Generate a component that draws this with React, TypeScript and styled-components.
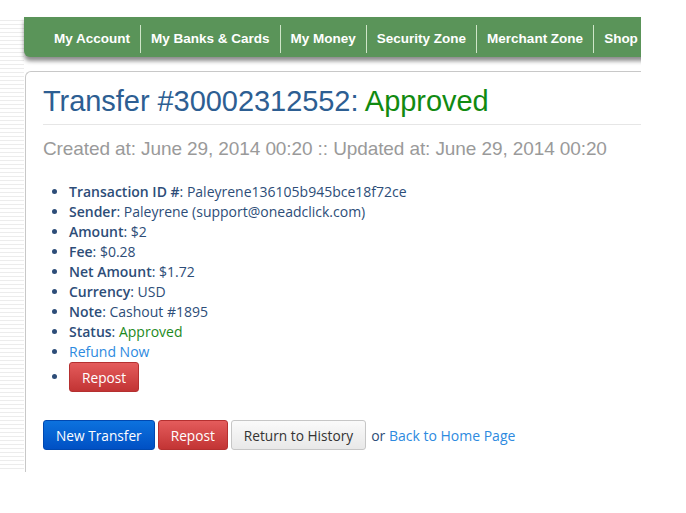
import React from "react";
import styled, { createGlobalStyle } from "styled-components";

const GlobalStyle = createGlobalStyle`
  html, body {
    margin: 0;
    padding: 0;
    background: #ffffff;
  }
`;

const navItems = [
  "My Account",
  "My Banks & Cards",
  "My Money",
  "Security Zone",
  "Merchant Zone",
  "Shop",
];

const details = [
  { label: "Transaction ID #", value: "Paleyrene136105b945bce18f72ce" },
  { label: "Sender", value: "Paleyrene (support@oneadclick.com)" },
  { label: "Amount", value: "$2" },
  { label: "Fee", value: "$0.28" },
  { label: "Net Amount", value: "$1.72" },
  { label: "Currency", value: "USD" },
  { label: "Note", value: "Cashout #1895" },
];

const App: React.FC = () => {
  return (
    <>
      <GlobalStyle />
      <Page>
        <Gutter />
        <Main>
          <NavBar>
            {navItems.map((item, i) => (
              <NavItem key={item} first={i === 0}>
                {item}
              </NavItem>
            ))}
          </NavBar>

          <Card>
            <Title>
              Transfer #30002312552: <Approved>Approved</Approved>
            </Title>
            <Dates>
              Created at: June 29, 2014 00:20 :: Updated at: June 29, 2014 00:20
            </Dates>

            <DetailList>
              {details.map((d) => (
                <li key={d.label}>
                  <b>{d.label}</b>: {d.value}
                </li>
              ))}
              <li>
                <b>Status</b>: <StatusText>Approved</StatusText>
              </li>
              <li>
                <Link href="#">Refund Now</Link>
              </li>
              <ButtonItem>
                <Button variant="red">Repost</Button>
              </ButtonItem>
            </DetailList>

            <Actions>
              <Button variant="blue">New Transfer</Button>
              <Button variant="red">Repost</Button>
              <Button variant="plain">Return to History</Button>
              <OrText>
                or <Link href="#">Back to Home Page</Link>
              </OrText>
            </Actions>
          </Card>
        </Main>
      </Page>
    </>
  );
};

const Page = styled.div`
  display: flex;
  align-items: flex-start;
  width: 641px;
  height: 513px;
  padding-top: 17px;
  box-sizing: border-box;
  overflow: hidden;
`;

const Gutter = styled.div`
  flex: 0 0 24px;
  height: 455px;
  background: repeating-linear-gradient(
    to bottom,
    #ffffff 0px,
    #ffffff 3px,
    #ececec 3px,
    #ececec 4px
  );
`;

const Main = styled.div`
  flex: 0 0 720px;
  display: flex;
  flex-direction: column;
`;

const NavBar = styled.div`
  display: flex;
  align-items: center;
  height: 40px;
  padding: 3px 0 0 20px;
  box-sizing: border-box;
  background: #5a9459;
  border-bottom-left-radius: 6px;
  box-shadow: 0 4px 4px rgba(0, 0, 0, 0.45);
  font-family: "Liberation Sans", Arial, sans-serif;
  font-size: 13.5px;
  font-weight: bold;
  color: #ffffff;
`;

const NavItem = styled.div<{ first: boolean }>`
  padding: 0 10px;
  line-height: 28px;
  white-space: nowrap;
  border-left: ${(p) => (p.first ? "none" : "1px solid #cfe6c8")};
`;

const Card = styled.div`
  margin-top: 14px;
  margin-left: 1px;
  height: 388px;
  padding: 12px 0 0 17px;
  border-top: 1px solid #c8c8c8;
  border-left: 1px solid #c8c8c8;
  border-top-left-radius: 6px;
  font-family: "Open Sans", "Noto Sans", sans-serif;
`;

const Title = styled.h1`
  margin: 0;
  padding-bottom: 5px;
  border-bottom: 1px solid #e6e6e6;
  font-family: "Liberation Sans", Arial, sans-serif;
  font-weight: normal;
  font-size: 29px;
  letter-spacing: -0.05px;
  line-height: 35px;
  color: #2d5e92;
`;

const Approved = styled.span`
  color: #118a11;
`;

const Dates = styled.div`
  margin-top: 12px;
  font-family: "Liberation Sans", Arial, sans-serif;
  font-size: 19px;
  letter-spacing: -0.1px;
  line-height: 24px;
  color: #9a9a9a;
  white-space: nowrap;
`;

const DetailList = styled.ul`
  margin: 21px 0 0;
  padding-left: 26px;
  font-size: 14px;
  line-height: 20px;
  color: #2d4d78;

  b {
    font-weight: 600;
  }
`;

const ButtonItem = styled.li`
  height: 30px;
  line-height: 30px;
`;

const StatusText = styled.span`
  color: #1d8a1d;
`;

const Link = styled.a`
  color: #2d8ae0;
  text-decoration: none;
`;

const variants = {
  blue: {
    bg: "linear-gradient(to bottom, #0c72de, #0050c4)",
    border: "#0048b0",
    color: "#ffffff",
  },
  red: {
    bg: "linear-gradient(to bottom, #e45c5c, #c23434)",
    border: "#b53030",
    color: "#ffffff",
  },
  plain: {
    bg: "linear-gradient(to bottom, #fafafa, #e8e8e8)",
    border: "#c6c6c6",
    color: "#333333",
  },
};

const Button = styled.button<{ variant: keyof typeof variants }>`
  display: inline-flex;
  align-items: center;
  height: 30px;
  padding: 0 12px;
  border: 1px solid ${(p) => variants[p.variant].border};
  border-radius: 3px;
  background: ${(p) => variants[p.variant].bg};
  color: ${(p) => variants[p.variant].color};
  font-family: "Open Sans", "Noto Sans", sans-serif;
  font-size: 13.7px;
  cursor: pointer;
  vertical-align: top;
`;

const Actions = styled.div`
  display: flex;
  align-items: center;
  gap: 3px;
  margin-top: 28px;
`;

const OrText = styled.span`
  margin-left: 2px;
  font-size: 14px;
  color: #2d4d78;
`;

export default App;
